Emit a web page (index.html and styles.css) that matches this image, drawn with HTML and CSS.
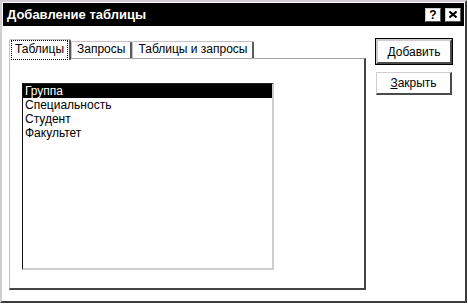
FILE: index.html
```html
<!DOCTYPE html>
<html lang="ru">
<head>
    <meta charset="UTF-8">
    <title>Добавление таблицы</title>
    <link rel="stylesheet" href="styles.css">
</head>
<body>

    <div class="window">
        <!-- Title bar -->
        <div class="titlebar">
            <span class="title">Добавление таблицы</span>
            <div class="title-buttons">
                <span class="tbtn">?</span>
                <span class="tbtn">
                    <svg width="8" height="7" viewBox="0 0 8 7">
                        <path d="M0.5 0.5 L7.5 6.5 M7.5 0.5 L0.5 6.5" stroke="#000" stroke-width="2" fill="none"/>
                    </svg>
                </span>
            </div>
        </div>

        <div class="content">
            <!-- Tabs with list -->
            <div class="tabs-area">
                <div class="tabs">
                    <div class="tab active"><span class="focus">Таблицы</span></div>
                    <div class="tab">Запросы</div>
                    <div class="tab">Таблицы и запросы</div>
                </div>
                <div class="panel">
                    <ul class="list">
                        <li class="selected">Группа</li>
                        <li>Специальность</li>
                        <li>Студент</li>
                        <li>Факультет</li>
                    </ul>
                </div>
            </div>

            <!-- Buttons -->
            <div class="actions">
                <button class="btn default"><u>Д</u>обавить</button>
                <button class="btn"><u>З</u>акрыть</button>
            </div>
        </div>
    </div>

</body>
</html>
```

FILE: styles.css
```css
/* Global */
* {
    margin: 0;
    padding: 0;
    box-sizing: border-box;
}

body {
    background: #fff;
    font-family: 'Liberation Sans', Arial, sans-serif;
    font-size: 12px;
    color: #000;
}

/* Window frame */
.window {
    width: 467px;
    height: 303px;
    padding: 1px;
    background: #fff;
    border-top: 2px solid #d3cbd3;
    border-left: 2px solid #d3cbd3;
    border-right: 2px solid #3c3c3c;
    border-bottom: 2px solid #3c3c3c;
}

/* Title bar */
.titlebar {
    height: 23px;
    background: #000;
    display: flex;
    align-items: center;
    justify-content: space-between;
    padding: 0 3px 0 4px;
}

.title {
    color: #fff;
    font-weight: bold;
    font-size: 13px;
}

.title-buttons {
    display: flex;
    gap: 4px;
}

.tbtn {
    width: 16px;
    height: 14px;
    background: #fff;
    border-top: 1px solid #d3cbd3;
    border-left: 1px solid #d3cbd3;
    border-right: 1px solid #555;
    border-bottom: 1px solid #555;
    display: flex;
    align-items: center;
    justify-content: center;
    font-weight: bold;
    font-size: 12px;
    line-height: 1;
}

/* Content */
.content {
    display: flex;
    padding: 13px 0 0 6px;
    gap: 10px;
}

/* Tabs */
.tabs {
    display: flex;
    height: 19px;
    align-items: flex-end;
    position: relative;
    z-index: 1;
}

.tab {
    height: 17px;
    padding: 0 5px;
    background: #fff;
    border-top: 1px solid #c8c0c8;
    border-left: 1px solid #c8c0c8;
    border-right: 2px solid #5a5a5a;
    border-radius: 2px 2px 0 0;
    line-height: 15px;
}

.tab.active {
    height: 21px;
    margin-bottom: -2px;
    padding: 1px 2px 0 2px;
    line-height: 16px;
}

.focus {
    display: block;
    padding: 0 3px;
    height: 18px;
    line-height: 17px;
    outline: 1px dotted #000;
}

.panel {
    width: 357px;
    height: 232px;
    background: #fff;
    border-top: 1px solid #a9a1a9;
    border-left: 1px solid #c8c0c8;
    border-right: 2px solid #454545;
    border-bottom: 2px solid #454545;
    padding: 24px 0 0 12px;
}

/* List box */
.list {
    list-style: none;
    width: 252px;
    height: 187px;
    border-top: 1px solid #222;
    border-left: 1px solid #111;
    border-right: 2px solid #d3cbd3;
    border-bottom: 2px solid #d3cbd3;
}

.list li {
    height: 14px;
    line-height: 14px;
    padding-left: 2px;
}

.list li.selected {
    background: #000;
    color: #fff;
}

/* Buttons */
.actions {
    display: flex;
    flex-direction: column;
    gap: 8px;
}

.btn {
    width: 76px;
    height: 23px;
    background: #fff;
    font-family: 'Liberation Sans', Arial, sans-serif;
    font-size: 12px;
    color: #000;
    border-top: 1px solid #d3cbd3;
    border-left: 1px solid #d3cbd3;
    border-right: 2px solid #4a4a4a;
    border-bottom: 2px solid #4a4a4a;
}

.btn.default {
    height: 25px;
    outline: 1px solid #000;
    border-top: 2px solid #d3cbd3;
    border-left: 2px solid #d3cbd3;
}
```
